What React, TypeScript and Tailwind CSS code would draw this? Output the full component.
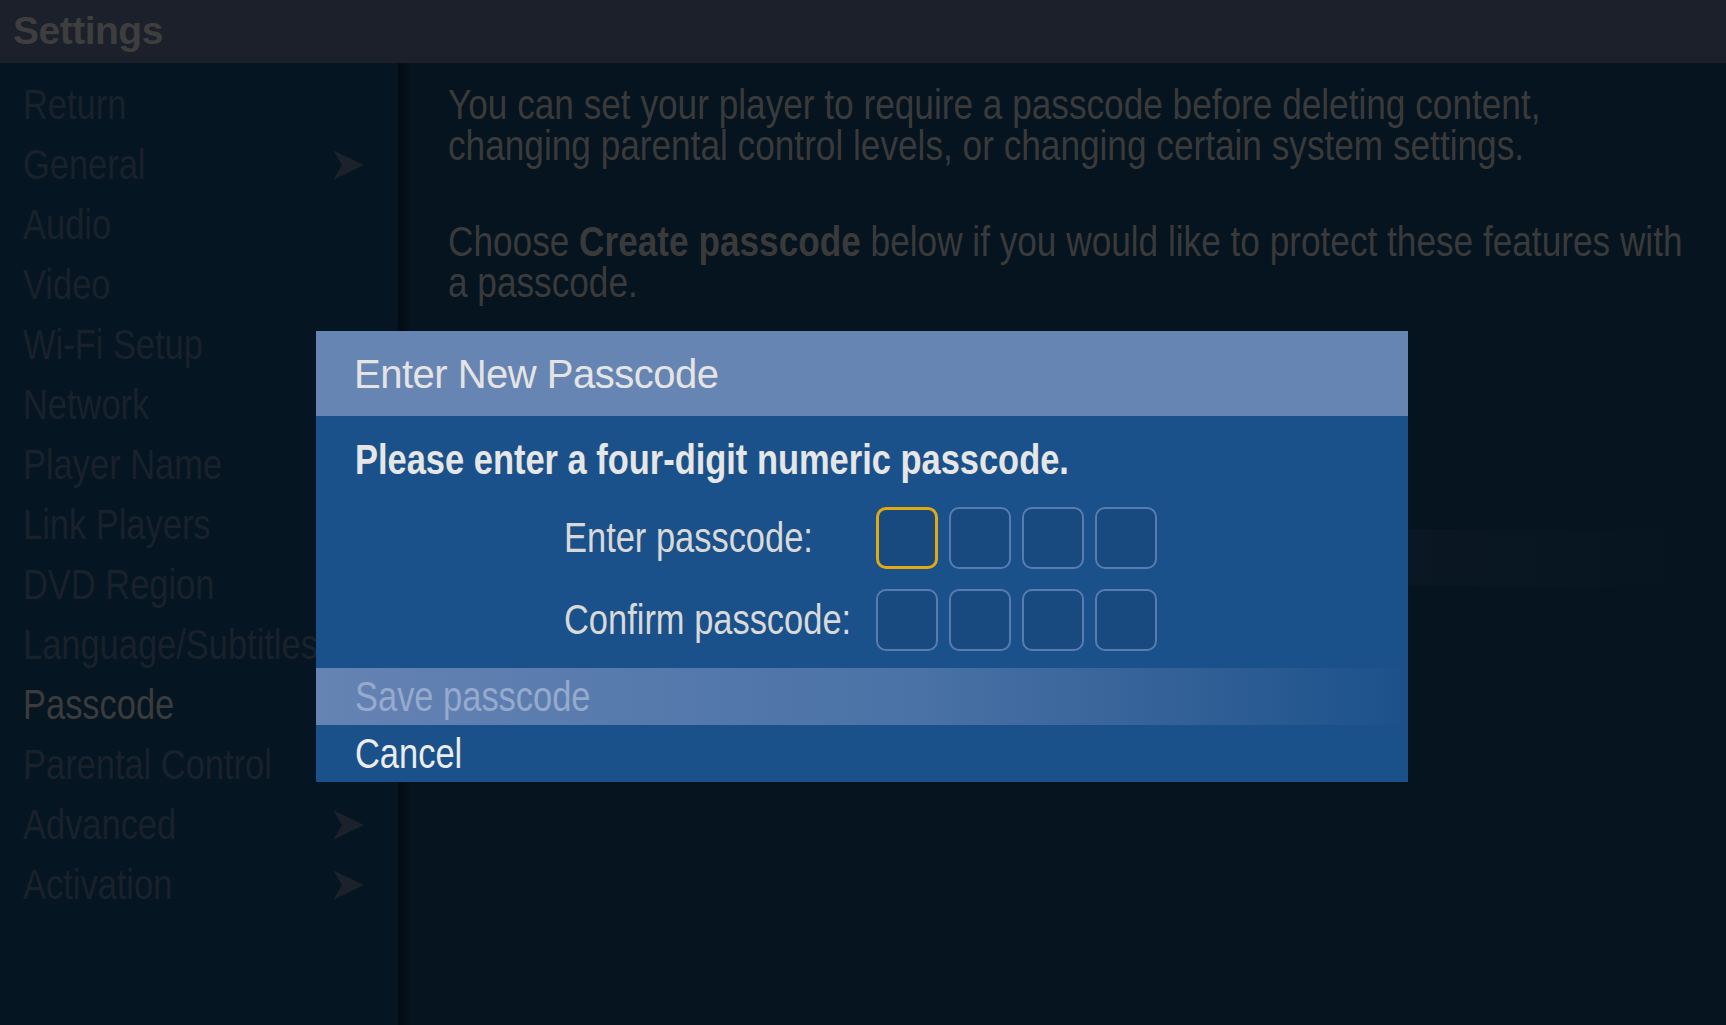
import React from "react";

type Item = { label: string; arrow?: boolean; active?: boolean };

const menu: Item[] = [
  { label: "Return" },
  { label: "General", arrow: true },
  { label: "Audio" },
  { label: "Video" },
  { label: "Wi-Fi Setup" },
  { label: "Network" },
  { label: "Player Name" },
  { label: "Link Players" },
  { label: "DVD Region" },
  { label: "Language/Subtitles" },
  { label: "Passcode", active: true },
  { label: "Parental Control" },
  { label: "Advanced", arrow: true },
  { label: "Activation", arrow: true },
];

// no condensed face installed, so squeeze Liberation Sans to narrow width
function N({ children, className = "" }: { children: React.ReactNode; className?: string }) {
  return (
    <span className={`inline-block origin-left scale-x-[0.82] whitespace-nowrap ${className}`}>{children}</span>
  );
}

function Arrow() {
  return (
    <svg width="31" height="30" viewBox="0 0 31 30" className="shrink-0">
      <polygon points="0,0 31,15 0,30 9,15" fill="#1b222c" />
    </svg>
  );
}

function Box({ focused }: { focused?: boolean }) {
  return (
    <div
      className={
        focused
          ? "w-[62px] h-[62px] rounded-[10px] border-[3px] border-[#e3a911] bg-[#184a7f]"
          : "w-[62px] h-[62px] rounded-[10px] border-2 border-[#587cb0] bg-[#184a7f]"
      }
    />
  );
}

function PasscodeDialog() {
  return (
    <div className="absolute left-[316px] top-[331px] w-[1092px] h-[451px] bg-[#1b518a] flex flex-col font-['Liberation_Sans',sans-serif]">
      <div className="h-[85px] shrink-0 bg-[#6785b3] flex items-center pl-[38px]">
        <span className="text-[40px] leading-none text-[#e4e4e4] tracking-[-0.5px]">Enter New Passcode</span>
      </div>
      <div className="shrink-0 pt-[23px] pl-[39px] text-[42px] leading-[42px] font-bold text-[#e6e6e6]">
        <N>Please enter a four-digit numeric passcode.</N>
      </div>
      <div className="shrink-0 mt-[26px] flex flex-col gap-[20px]">
        {["Enter passcode:", "Confirm passcode:"].map((label, row) => (
          <div key={label} className="flex items-center">
            <div className="w-[560px] shrink-0 pl-[248px] text-[42px] leading-[42px] text-[#d9d9d9]">
              <N>{label}</N>
            </div>
            <div className="flex gap-[11px]">
              {[0, 1, 2, 3].map((i) => (
                <Box key={i} focused={row === 0 && i === 0} />
              ))}
            </div>
          </div>
        ))}
      </div>
      <div className="shrink-0 mt-[17px] h-[57px] flex items-center pl-[39px] bg-gradient-to-r from-[#6583b3] via-[#4a72a6] via-[55%] to-[#1b518a] text-[42px] leading-none text-[#95aacd]">
        <N>Save passcode</N>
      </div>
      <div className="shrink-0 h-[57px] flex items-center pl-[39px] text-[42px] leading-none text-[#ececec]">
        <N>Cancel</N>
      </div>
    </div>
  );
}

export default function App() {
  return (
    <div className="relative w-[1726px] h-[1025px] overflow-hidden bg-[#05141f] flex flex-col font-['Liberation_Sans',sans-serif]">
      <header className="h-[63px] shrink-0 bg-[#1b202a] flex items-center pl-[13px]">
        <span className="font-bold text-[39px] text-[#3e3e3e] tracking-[-0.5px]">Settings</span>
      </header>

      <div className="flex flex-1">
        <aside className="w-[398px] shrink-0 bg-[#061522] pt-[12px]">
          {menu.map((m) => (
            <div key={m.label} className="h-[60px] flex items-center justify-between pl-[23px] pr-[34px]">
              <N className={m.active ? "text-[42px] leading-none text-[#3b3b3b]" : "text-[42px] leading-none text-[#19212b]"}>
                {m.label}
              </N>
              {m.arrow && <Arrow />}
            </div>
          ))}
        </aside>
        <div className="w-[12px] shrink-0 bg-gradient-to-r from-[#030b12] to-[#05121c]" />

        <main className="flex-1 min-w-0 pl-[38px] pt-[21px] text-[42px] leading-[41px] text-[#3a3a3a]">
          <div>
            <span className="inline-block origin-left scale-x-[0.838] whitespace-nowrap">
              You can set your player to require a passcode before deleting content,
              <br />
              changing parental control levels, or changing certain system settings.
            </span>
          </div>
          <div className="mt-[55px]">
            <span className="inline-block origin-left scale-x-[0.838] whitespace-nowrap">
              Choose <b className="font-bold">Create passcode</b> below if you would like to protect these features with
              <br />a passcode.
            </span>
          </div>
          <div className="mt-[227px] w-[1242px] h-[56px] bg-gradient-to-r from-[#0d1926] from-[70%] to-transparent" />
        </main>
      </div>

      <PasscodeDialog />
    </div>
  );
}
